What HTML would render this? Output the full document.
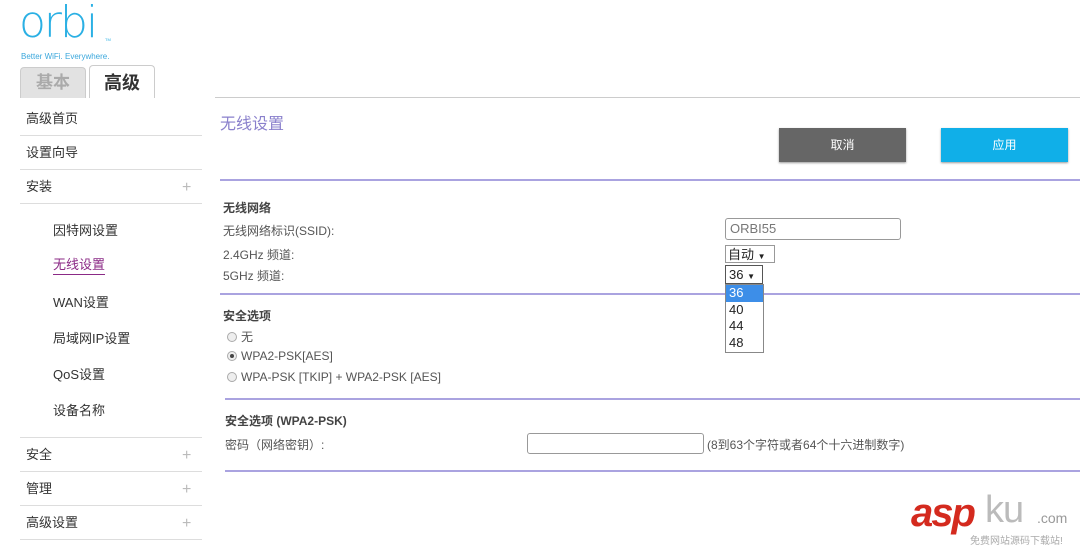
<!DOCTYPE html>
<html><head><meta charset="utf-8"><style>
*{margin:0;padding:0;box-sizing:border-box}
body{width:1080px;height:552px;background:#fff;position:relative;overflow:hidden;font-family:"Liberation Sans","Noto Sans CJK SC",sans-serif;color:#444}
.a{position:absolute;white-space:nowrap}
.s{font-size:13px;color:#333}
.hl{position:absolute;height:1px;background:#ddd}
.pl{position:absolute;height:2px;background:#aaa3e0}
.f{font-size:12px;color:#555}
.plus{position:absolute;left:182px;font-size:16px;color:#bbb;font-weight:300}
.rad{display:inline-block;width:10px;height:10px;border:1px solid #aaa;border-radius:50%;background:#eee;vertical-align:-1px;margin-right:4px;position:relative}
</style></head><body>
<div class="a" style="left:19px;top:-3px;font-size:44px;color:#2bb0e4;letter-spacing:-2px;font-family:'DejaVu Sans',sans-serif;font-weight:200">orbi</div>
<div class="a" style="left:105px;top:37px;font-size:4px;color:#2bb0e4">TM</div>
<div class="a" style="left:21px;top:52px;font-size:8px;color:#3aa7dc">Better WiFi. Everywhere.</div>
<div class="a" style="left:20px;top:67px;width:66px;height:31px;background:#e2e2e2;border:1px solid #ccc;border-bottom:none;border-radius:4px 4px 0 0;text-align:center;font-size:17px;font-weight:bold;color:#aaa;line-height:30px">基本</div>
<div class="a" style="left:89px;top:65px;width:66px;height:33px;background:#fff;border:1px solid #ccc;border-bottom:none;border-radius:4px 4px 0 0;text-align:center;font-size:18px;font-weight:bold;color:#333;line-height:34px">高级</div>
<div class="hl" style="left:215px;top:97px;width:865px;background:#ccc"></div>

<div class="a s" style="left:26px;top:108px">高级首页</div><div class="hl" style="left:20px;top:135px;width:182px"></div>
<div class="a s" style="left:26px;top:142px">设置向导</div><div class="hl" style="left:20px;top:169px;width:182px"></div>
<div class="a s" style="left:26px;top:176px">安装</div><div class="plus" style="top:179px">+</div><div class="hl" style="left:20px;top:203px;width:182px"></div>
<div class="a s" style="left:53px;top:220px">因特网设置</div>
<div class="a s" style="left:53px;top:254px;color:#8b2a86;border-bottom:1px solid #8b2a86;padding-bottom:1px">无线设置</div>
<div class="a s" style="left:53px;top:292px">WAN设置</div>
<div class="a s" style="left:53px;top:328px">局域网IP设置</div>
<div class="a s" style="left:53px;top:364px">QoS设置</div>
<div class="a s" style="left:53px;top:400px">设备名称</div>
<div class="hl" style="left:20px;top:437px;width:182px"></div>
<div class="a s" style="left:26px;top:444px">安全</div><div class="plus" style="top:447px">+</div><div class="hl" style="left:20px;top:471px;width:182px"></div>
<div class="a s" style="left:26px;top:478px">管理</div><div class="plus" style="top:481px">+</div><div class="hl" style="left:20px;top:505px;width:182px"></div>
<div class="a s" style="left:26px;top:512px">高级设置</div><div class="plus" style="top:515px">+</div><div class="hl" style="left:20px;top:539px;width:182px"></div>

<div class="a" style="left:220px;top:110px;font-size:16px;color:#8a80cc">无线设置</div>
<div class="a" style="left:779px;top:128px;width:127px;height:34px;background:#666;color:#fff;font-size:12px;text-align:center;line-height:34px;box-shadow:0 1px 2px #999">取消</div>
<div class="a" style="left:941px;top:128px;width:127px;height:34px;background:#10afe8;color:#fff;font-size:12px;text-align:center;line-height:34px;box-shadow:0 1px 2px #999">应用</div>
<div class="pl" style="left:220px;top:179px;width:860px"></div>

<div class="a f" style="left:223px;top:199px;font-weight:bold;color:#444">无线网络</div>
<div class="a f" style="left:223px;top:222px">无线网络标识(SSID):</div>
<div class="a f" style="left:223px;top:246px">2.4GHz 频道:</div>
<div class="a f" style="left:223px;top:267px">5GHz 频道:</div>
<div class="a" style="left:725px;top:218px;width:176px;height:22px;border:1px solid #999;border-radius:3px;font-size:13px;color:#777;padding:2px 4px">ORBI55</div>
<div class="a" style="left:725px;top:245px;width:50px;height:18px;border:1px solid #999;font-size:13px;color:#222;padding:0 2px;line-height:17px">自动 <span style="font-size:8px">▼</span></div>
<div class="a" style="left:725px;top:265px;width:38px;height:19px;border:1px solid #555;font-size:13px;color:#222;padding:0 3px;line-height:18px">36 <span style="font-size:8px">▼</span></div>
<div class="a" style="left:725px;top:284px;width:39px;height:69px;border:1px solid #888;background:#fff;font-size:13px;color:#222;line-height:16.5px">
<div style="background:#3d8ee8;color:#fff;padding-left:3px">36</div><div style="padding-left:3px">40</div><div style="padding-left:3px">44</div><div style="padding-left:3px">48</div></div>
<div class="pl" style="left:220px;top:293px;width:505px"></div>
<div class="pl" style="left:764px;top:293px;width:316px"></div>

<div class="a f" style="left:223px;top:307px;font-weight:bold;color:#444">安全选项</div>
<div class="a f" style="left:227px;top:328px"><span class="rad"></span>无</div>
<div class="a f" style="left:227px;top:349px"><span class="rad"><span style="position:absolute;left:2px;top:2px;width:4px;height:4px;border-radius:50%;background:#444"></span></span>WPA2-PSK[AES]</div>
<div class="a f" style="left:227px;top:370px"><span class="rad"></span>WPA-PSK [TKIP] + WPA2-PSK [AES]</div>
<div class="pl" style="left:225px;top:398px;width:855px"></div>

<div class="a f" style="left:225px;top:412px;font-weight:bold;color:#444">安全选项 (WPA2-PSK)</div>
<div class="a f" style="left:225px;top:436px">密码（网络密钥）:</div>
<div class="a" style="left:527px;top:433px;width:177px;height:21px;border:1px solid #999;border-radius:3px"></div>
<div class="a f" style="left:707px;top:436px">(8到63个字符或者64个十六进制数字)</div>
<div class="pl" style="left:225px;top:470px;width:855px"></div>

<div class="a" style="left:911px;top:491px;font-size:40px;font-weight:bold;font-style:italic;color:#d42a1e;letter-spacing:-2px">asp</div>
<div class="a" style="left:985px;top:489px;font-size:38px;color:#bbb;font-weight:100;letter-spacing:-1px">ku</div>
<div class="a" style="left:1037px;top:510px;font-size:14px;color:#999">.com</div>
<div class="a" style="left:970px;top:532px;font-size:10px;color:#aaa">免费网站源码下载站!</div>
</body></html>
